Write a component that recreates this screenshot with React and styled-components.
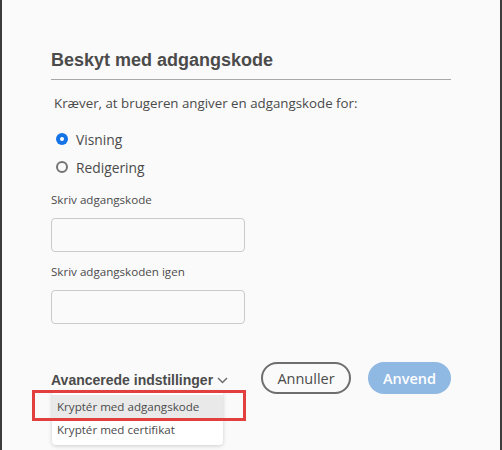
import React from "react";
import styled, { createGlobalStyle } from "styled-components";

const Global = createGlobalStyle`
  html, body { margin: 0; padding: 0; background: #fafafa; }
  #root { width: 502px; height: 450px; }
  * { box-sizing: border-box; }
`;

const Frame = styled.div`
  position: relative;
  width: 502px;
  height: 450px;
  background: #fafafa;
  border-left: 2px solid #3c3c3c;
  border-right: 2px solid #3c3c3c;
  padding: 49px 0 0 49px;
  display: flex;
  flex-direction: column;
  font-family: "Open Sans", "Noto Sans", sans-serif;
  color: #4b4b4b;
  overflow: hidden;
`;

const Content = styled.div`
  width: 400px;
  display: flex;
  flex-direction: column;
`;

const Title = styled.h1`
  margin: 0;
  font-family: "Liberation Sans", Arial, sans-serif;
  font-weight: 700;
  font-size: 18px;
  line-height: 22px;
  color: #4b4b4b;
`;

const Divider = styled.hr`
  margin: 8px 0 0;
  border: 0;
  height: 1px;
  background: #a8a8a8;
`;

const Description = styled.p`
  margin: 13px 0 0;
  padding-left: 3px;
  font-size: 13.3px;
  line-height: 20px;
  color: #4b4b4b;
`;

const RadioGroup = styled.div`
  margin-top: 12px;
  display: flex;
  flex-direction: column;
`;

const RadioRow = styled.label`
  height: 28px;
  display: flex;
  align-items: center;
  padding-left: 5px;
  gap: 8px;
  font-size: 13.8px;
  color: #4b4b4b;
`;

const RadioDot = styled.span`
  width: 12px;
  height: 12px;
  border-radius: 50%;
  flex: none;
  background: ${(p) => (p.$checked ? "#1473e6" : "#fafafa")};
  border: ${(p) => (p.$checked ? "none" : "2px solid #747474")};
  display: flex;
  align-items: center;
  justify-content: center;
  &::after {
    content: "";
    display: ${(p) => (p.$checked ? "block" : "none")};
    width: 4px;
    height: 4px;
    border-radius: 50%;
    background: #ffffff;
  }
`;

const Field = styled.div`
  margin-top: ${(p) => p.$mt}px;
  display: flex;
  flex-direction: column;
`;

const FieldLabel = styled.span`
  font-size: 11.6px;
  line-height: 18px;
  color: #4b4b4b;
`;

const Input = styled.input`
  margin-top: 9px;
  width: 194px;
  height: 34px;
  border: 1px solid #cacaca;
  border-radius: 4px;
  background: #fafafa;
  outline: none;
`;

const Footer = styled.div`
  position: relative;
  margin-top: 38px;
  height: 32px;
  display: flex;
  align-items: center;
  justify-content: space-between;
`;

const Advanced = styled.span`
  padding-top: 4px;
  display: flex;
  align-items: center;
  gap: 4px;
  font-family: "Liberation Sans", Arial, sans-serif;
  font-weight: 700;
  font-size: 14px;
  color: #4b4b4b;
`;

const Buttons = styled.div`
  display: flex;
  gap: 17px;
`;

const Button = styled.button`
  height: 32px;
  width: ${(p) => p.$w}px;
  border-radius: 16px;
  font-family: "Open Sans", "Noto Sans", sans-serif;
  font-size: 14.5px;
  padding: 0;
  border: ${(p) => (p.$primary ? "none" : "2px solid #6e6e6e")};
  background: ${(p) => (p.$primary ? "#8fb8e3" : "#fafafa")};
  color: ${(p) => (p.$primary ? "#ffffff" : "#4b4b4b")};
  font-weight: ${(p) => (p.$primary ? 600 : 400)};
`;

const Menu = styled.div`
  position: absolute;
  left: 1px;
  top: 29px;
  width: 171px;
  padding: 4px 0 4px;
  background: #ffffff;
  border-radius: 4px;
  box-shadow: 0 1px 4px rgba(0, 0, 0, 0.18);
  display: flex;
  flex-direction: column;
`;

const MenuItem = styled.div`
  height: 23px;
  display: flex;
  align-items: center;
  padding-left: 5px;
  font-size: 11.6px;
  color: #4b4b4b;
  background: ${(p) => (p.$active ? "#e9e9e9" : "transparent")};
`;

const Highlight = styled.div`
  position: absolute;
  left: -19px;
  top: 28px;
  width: 214px;
  height: 31px;
  border: 3px solid #e2403f;
`;

const Chevron = () => (
  <svg width="11" height="7" viewBox="0 0 11 7" fill="none">
    <path d="M1 1l4.5 4.5L10 1" stroke="#6e6e6e" strokeWidth="1.5" />
  </svg>
);

export default function App() {
  return (
    <>
      <Global />
      <Frame>
        <Content>
          <Title>Beskyt med adgangskode</Title>
          <Divider />
          <Description>Kræver, at brugeren angiver en adgangskode for:</Description>
          <RadioGroup>
            <RadioRow>
              <RadioDot $checked />
              Visning
            </RadioRow>
            <RadioRow>
              <RadioDot />
              Redigering
            </RadioRow>
          </RadioGroup>
          <Field $mt={10}>
            <FieldLabel>Skriv adgangskode</FieldLabel>
            <Input type="password" />
          </Field>
          <Field $mt={11}>
            <FieldLabel>Skriv adgangskoden igen</FieldLabel>
            <Input type="password" />
          </Field>
          <Footer>
            <Advanced>
              Avancerede indstillinger
              <Chevron />
            </Advanced>
            <Buttons>
              <Button $w={90}>Annuller</Button>
              <Button $w={83} $primary>Anvend</Button>
            </Buttons>
            <Menu>
              <MenuItem $active>Kryptér med adgangskode</MenuItem>
              <MenuItem>Kryptér med certifikat</MenuItem>
            </Menu>
            <Highlight />
          </Footer>
        </Content>
      </Frame>
    </>
  );
}
